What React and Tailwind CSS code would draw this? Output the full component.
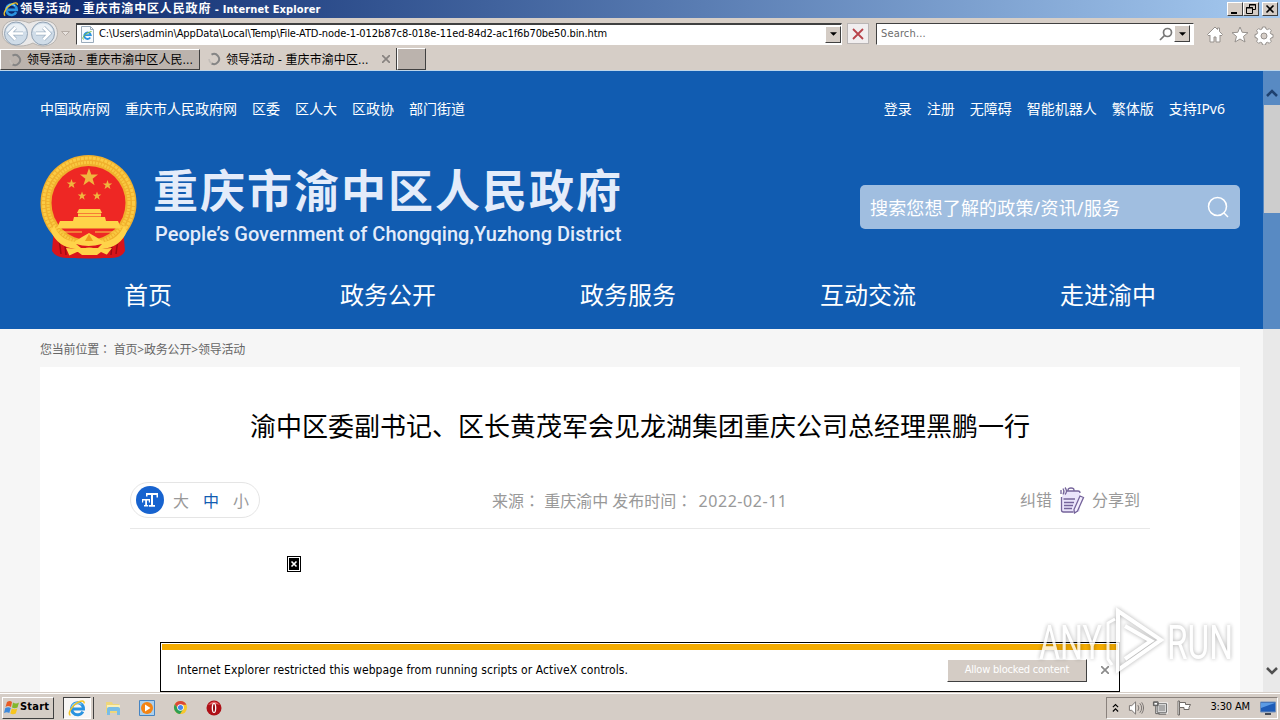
import clsx from 'clsx';

const leftLinks = ['中国政府网', '重庆市人民政府网', '区委', '区人大', '区政协', '部门街道'];
const rightLinks = ['登录', '注册', '无障碍', '智能机器人', '繁体版', '支持IPv6'];
const navItems = ['首页', '政务公开', '政务服务', '互动交流', '走进渝中'];

const raised = 'border border-t-white border-l-white border-r-[#404040] border-b-[#404040]';
const sunken = 'border border-t-[#404040] border-l-[#404040] border-r-white border-b-white';

function IeLogo({ className }) {
    return (
        <svg viewBox="0 0 16 16" className={className} fill="none">
            <path d="M13.200 11.200A5.300 5.300 0 1 1 13.800 8.900H4" stroke="#2a93e0" strokeWidth="2.600" />
            <path d="M3.200 7.500A5.400 5.400 0 0 1 12 4.800" stroke="#8fd3fa" strokeWidth="1" />
            <path d="M2.200 14.600C-.6 13 3 6.600 8 3.500c3.500-2.200 6.800-2.400 6.300.5" stroke="#f3c426" strokeWidth="1.300" />
        </svg>
    );
}

function Spinner() {
    return (
        <svg viewBox="0 0 14 14" className="w-[14px] h-[14px] shrink-0" fill="none">
            <path d="M4.500 2.700a5 5 0 1 1 0 8.600" stroke="#858585" strokeWidth="2" />
            <path d="M4.500 11.300A5 5 0 0 1 2 7" stroke="#c2bdb8" strokeWidth="1.600" />
        </svg>
    );
}

function DropButton() {
    return (
        <div className={clsx('w-4 h-[17px] bg-[#d4ccc5] flex items-center justify-center', raised)}>
            <svg viewBox="0 0 8 4" className="w-[7px] h-1"><path d="M0 0h8L4 4z" fill="#000" /></svg>
        </div>
    );
}

function TitleBar() {
    return (
        <div className="h-[18px] flex items-center pl-[3px] pr-[2px] bg-linear-to-r from-[#0a246a] to-[#a6caf0]">
            <IeLogo className="w-4 h-4" />
            <span className="ml-px text-[11px] leading-[18px] font-bold text-white whitespace-nowrap tracking-[0.12px]">
                <span className="text-[12px] tracking-[0.85px]">领导活动</span> - <span className="text-[12px] tracking-[0.85px]">重庆市渝中区人民政府</span> - Internet Explorer
            </span>
            <div className="ml-auto flex h-[14px] text-black">
                <div className={clsx('w-4 bg-[#d4ccc5]', raised)}>
                    <svg viewBox="0 0 14 12" className="w-[14px] h-3"><path d="M3 9h6v2H3z" /></svg>
                </div>
                <div className={clsx('w-4 bg-[#d4ccc5]', raised)}>
                    <svg viewBox="0 0 14 12" className="w-[14px] h-3" fill="none" stroke="#000">
                        <path d="M5.500 4V1.500h6v5H9M5 2h7M2.500 4.500h6v6h-6zM2 5h7" />
                    </svg>
                </div>
                <div className={clsx('ml-[3px] w-4 bg-[#d4ccc5]', raised)}>
                    <svg viewBox="0 0 14 12" className="w-[14px] h-3" stroke="#000" strokeWidth="1.600"><path d="M3.500 2.500l7 7M10.500 2.500l-7 7" /></svg>
                </div>
            </div>
        </div>
    );
}

function NavButtons() {
    return (
        <svg viewBox="0 0 76 30" className="w-[76px] h-[30px] shrink-0" fill="none">
            <path d="M4 8C8 1 20 1 29 5c9-4 21-4 26 2 4 6 3 14-2 18-7 5-15 3-20 0-8 4-18 4-25 0C2 21 1 14 4 8z" fill="#e9e8e8" stroke="#b7b3af" />
            <circle cx="16" cy="15.500" r="11.500" fill="#cfdce8" stroke="#93a3b4" />
            <circle cx="43" cy="15.500" r="11.500" fill="#cfdce8" stroke="#93a3b4" />
            <path d="M6 13a10.500 10.500 0 0 1 20 0q-10 3-20 0zM33 13a10.500 10.500 0 0 1 20 0q-10 3-20 0z" fill="#eaf0f5" />
            <path d="M23 15.500H10m5.500-6l-6 6 6 6" stroke="#9fb1c3" strokeWidth="4" />
            <path d="M36 15.500h13m-5.500-6l6 6-6 6" stroke="#9fb1c3" strokeWidth="4" />
            <path d="M23 15.500H10m5.500-6l-6 6 6 6" stroke="#fff" strokeWidth="2.600" />
            <path d="M36 15.500h13m-5.500-6l6 6-6 6" stroke="#fff" strokeWidth="2.600" />
            <path d="M61.500 13.500h8l-4 4z" fill="#e8e3df" stroke="#b5aca5" />
        </svg>
    );
}

function Toolbar() {
    return (
        <div className="h-[30px] flex items-center text-[11px]">
            <NavButtons />
            <div className={clsx('w-[766px] h-[22px] flex items-center bg-white border-t-2 pl-[3px] mt-px', sunken)}>
                <svg viewBox="0 0 15 17" className="w-[15px] h-[17px]">
                    <path d="M1.500.5h9l3 3v13h-12z" fill="#f7fafd" stroke="#9aabbb" />
                    <path d="M10.500.5v3h3" fill="none" stroke="#9aabbb" />
                    <IeLogoInner />
                </svg>
                <span className="ml-[4px] whitespace-nowrap tracking-[-0.09px]">
                    C:\Users\admin\AppData\Local\Temp\File-ATD-node-1-012b87c8-018e-11ed-84d2-ac1f6b70be50.bin.htm
                </span>
                <div className="ml-auto"><DropButton /></div>
            </div>
            <div className="ml-[5px] mt-px w-[22px] h-[21px] border border-[#b9b5b5] bg-[#f1eeef] flex items-center justify-center">
                <svg viewBox="0 0 12 12" className="w-3 h-3" stroke="#b8434a" strokeWidth="1.800"><path d="M1 1l10 10M11 1L1 11" /></svg>
            </div>
            <div className={clsx('ml-[7px] mt-px w-[318px] h-[22px] flex items-center bg-white pl-[4px] pr-[3px]', sunken)}>
                <span className="text-[#6d6d6d] tracking-[0.15px] pt-[2px]">Search...</span>
                <svg viewBox="0 0 14 14" className="ml-auto mr-px w-[14px] h-[14px]" fill="none" stroke="#777" strokeWidth="1.700">
                    <circle cx="8.500" cy="5.500" r="4" /><path d="M5.500 8.500L1 13" />
                </svg>
                <DropButton />
            </div>
            <svg viewBox="0 0 70 20" className="ml-[12px] mt-[3px] w-[70px] h-5" fill="#fff" stroke="#96918d">
                <path d="M1.500 9.500L9 2l2.500 2.500V3h2v3.500l3 3-1.500 1.500-1-1v7h-4v-5H8v5H4v-7l-1 1z" />
                <path d="M34 2l2.200 5.300 5.800.4-4.500 3.700 1.500 5.600-5-3-5 3 1.500-5.600L26 7.700l5.800-.4z" />
                <path d="M56.500 2h3l.5 2 1.500.6 1.800-1 2 2-1 1.900.6 1.500 2.100.5v3l-2.100.5-.6 1.500 1 1.800-2 2-1.800-1-1.500.6-.5 2.100h-3l-.5-2.100-1.500-.6-1.900 1-2-2 1-1.800-.6-1.500-2-.5v-3l2-.5.6-1.500-1-1.900 2-2 1.900 1 1.500-.6z" />
                <circle cx="58" cy="11" r="3" fill="#d6cec7" />
            </svg>
        </div>
    );
}

function IeLogoInner() {
    return (
        <g fill="none">
            <path d="M10.300 11.500A3.300 3.300 0 1 1 10.800 9.200H4.500" stroke="#2a93e0" strokeWidth="1.800" />
            <path d="M3.500 13.500C1.500 12 5 7 11.500 5.500" stroke="#7cbf3c" />
        </g>
    );
}

function TabBar() {
    return (
        <div className="h-[22px] flex items-end text-[12px] leading-[20px] whitespace-nowrap">
            <div className={clsx('w-[200px] h-[21px] flex items-center bg-[#bbb3ad] pl-[7px]', raised)}>
                <Spinner />
                <span className="ml-[5px] tracking-[0.05px]">领导活动 - 重庆市渝中区人民...</span>
            </div>
            <div className="w-[197px] h-[22px] flex items-center bg-[#d6cec7] border-r border-r-[#404040] pl-[7px]">
                <Spinner />
                <span className="ml-[5px] pt-px tracking-[0.1px]">领导活动 - 重庆市渝中区...</span>
                <svg viewBox="0 0 8 8" className="ml-auto mr-[6px] w-2 h-2" stroke="#888380" strokeWidth="1.700"><path d="M0 0l8 8M8 0L0 8" /></svg>
            </div>
            <div className={clsx('w-[29px] h-[22px] bg-[#bbb3ad]', raised)} />
        </div>
    );
}

function Emblem() {
    const star = 'M0-10L2.400-3.200 9.500-3.100 3.800 1.200 5.900 8.100 0 4 -5.900 8.100 -3.800 1.200 -9.500-3.100 -2.400-3.200Z';
    return (
        <svg viewBox="0 0 98 104" className="w-[98px] h-[104px] shrink-0">
            <path d="M14 72L12 96q4 7 16 7h42q12 0 15-7l-2-24z" fill="#d9141a" />
            <path d="M18 76l3 23M24 80l2 20M79 76l-3 23M73 80l-2 20" stroke="#9f0b12" strokeWidth="1.500" />
            <circle cx="48.500" cy="48" r="48" fill="#f0b02d" />
            <circle cx="48.500" cy="48" r="45" fill="none" stroke="#fbcb45" strokeWidth="3" strokeDasharray="3 1" />
            <circle cx="48.500" cy="48" r="40.500" fill="none" stroke="#f9c941" strokeWidth="3" strokeDasharray="2 1" />
            <circle cx="48.500" cy="48" r="37" fill="#ee2724" />
            <g fill="#f0b63e">
                <path transform="translate(49 22.500) scale(.95)" d={star} />
                <path transform="translate(31.500 29) scale(.5)" d={star} />
                <path transform="translate(67.500 30) scale(.5)" d={star} />
                <path transform="translate(42 41) scale(.45)" d={star} />
                <path transform="translate(57 41) scale(.45)" d={star} />
            </g>
            <g fill="#ffd349">
                <path d="M39 54h21l2 4H37zM38 58.500h23v3H38zM34 62h31l1 4H33zM20 66h58l3 7H17z" />
                <path d="M14 70q5 14 20 17l8-5 7-4 7 4 8 5q15-3 20-17l3 6q-6 16-25 18H36Q17 92 11 76z" />
                <path d="M26 93l12 1 5-5h12l5 5 12-1-7 9-6-3-8 2h-6l-8-2-7 3z" />
            </g>
            <path d="M20 73h58M22 77h20M55 77h20" stroke="#f8d04a" strokeWidth="1" />
            <path d="M49 79l-4 7h8z" fill="#ee9d1c" />
            <path d="M36 89q12 4 26 0l-4 4H41zM26 102l11-5h24l11 5q-23 3-46 0z" fill="#d9141a" />
            <path d="M38 97q11-9 23 0l-4 3H42z" fill="#ffd349" />
        </svg>
    );
}

function SiteHeader() {
    return (
        <header className="h-[258px] bg-[#115cb1] text-white pt-[28px]">
            <div className="flex justify-between px-10 text-[14px] leading-5 whitespace-nowrap">
                <div className="flex gap-[15px]">
                    {leftLinks.map((l) => <a key={l}>{l}</a>)}
                </div>
                <div className="flex gap-[15px] pr-[15px]">
                    {rightLinks.map((l) => <a key={l}>{l}</a>)}
                </div>
            </div>
            <div className="flex px-10 pt-[36px]">
                <Emblem />
                <div className="ml-[15px] pt-[8px] text-[#e4ecfa]">
                    <div className="text-[45px] leading-[56px] font-bold tracking-[2px] whitespace-nowrap">重庆市渝中区人民政府</div>
                    <div className="font-['Roboto'] text-[20px] leading-[28px] mt-px pl-[2px] font-medium whitespace-nowrap tracking-[0.02px]">
                        People’s Government of Chongqing,Yuzhong District
                    </div>
                </div>
                <div className="ml-auto mt-[30px] w-[380px] h-[44px] rounded-[5px] bg-[#a0bee0] flex items-center pl-[10px] pr-[11px]">
                    <span className="text-[18px] leading-6 pt-[2px] tracking-[0.18px]">搜索您想了解的政策/资讯/服务</span>
                    <svg viewBox="0 0 22 22" className="ml-auto w-[22px] h-[22px]" fill="none" stroke="#fff" strokeWidth="1.500">
                        <circle cx="10.500" cy="10.500" r="9" /><path d="M17 17l4 4" />
                    </svg>
                </div>
            </div>
            <nav className="flex pl-[28px] pt-[19px]">
                {navItems.map((n) => (
                    <a key={n} className="w-[240px] text-center text-[24px] leading-[34px]">{n}</a>
                ))}
            </nav>
        </header>
    );
}

// full-width colon centred in its box
function Colon() {
    return <span className="font-['Noto_Sans_CJK_TC']" lang="zh-TW">：</span>;
}

function Article() {
    return (
        <main className="mx-10 h-[326px] bg-white">
            <h1 className="pt-[40px] text-center text-[26px] leading-[38px] text-black whitespace-nowrap">
                渝中区委副书记、区长黄茂军会见龙湖集团重庆公司总经理黑鹏一行
            </h1>
            <div className="mx-[90px] mt-[37px] h-[47px] border-b border-[#e8e8e8] flex items-start text-[16px] leading-[36px] text-[#999]">
                <div className="w-[130px] h-[36px] rounded-full border border-[#e5e5e5] flex items-center pl-[5px]">
                    <svg viewBox="0 0 28 28" className="w-7 h-7 mr-[9px]">
                        <circle cx="14" cy="14" r="14" fill="#1763cf" />
                        <path d="M10 7h12v4.500h-1.500V9H17v10h2v1.800h-6V19h2V9h-3.500v1.500H10zM6 13h8v3.500h-1.200V14.500H11V19h1.200v1.500H8V19h1.200v-4.500H7.200v2H6z" fill="#fff" />
                    </svg>
                    <span className="mr-[14px] pt-[2px]">大</span>
                    <span className="mr-[14px] pt-[2px] text-[#115cb1]">中</span>
                    <span className="pt-[2px]">小</span>
                </div>
                <div className="whitespace-pre ml-[232px]">
                    来源<Colon /> 重庆渝中 发布时间<Colon /> <span className="ml-[2px] tracking-[0.55px]">2022-02-11</span>
                </div>
                <div className="flex items-center ml-auto mr-[10px]">
                    <span>纠错</span>
                    <svg viewBox="0 0 26 28" className="w-[26px] h-7 mx-[7px]" fill="none" stroke="#75649b" strokeWidth="1.300">
                        <path d="M3 10q3-2 4-5h12q2 0 2 3v16q0 2-2 2H5q-2 0-2-2z" fill="#eae4fb" stroke="none" />
                        <path d="M2.500 11v13q0 2 2 2h10M9 5V4q0-2 3-2t3 2v1h4q2 0 2 2M8 5h8M4.500 13H16M5 16.500h10M5 19.500h9M5 22.500h8" />
                        <path d="M21 10l3.500 1.500-6 13.500-3 2-.5-3.500z" fill="#f5efff" />
                        <path d="M2 4v4M4 2.500q2 3 0 6M6 1.500q3 4 0 7" />
                    </svg>
                    <span>分享到</span>
                </div>
            </div>
            <div className="ml-[247px] mt-[27px] w-[14px] h-4 border border-black p-px">
                <svg viewBox="0 0 10 12" className="w-[10px] h-3"><path d="M0 0h10v12H0z" /><path d="M2.500 3.500l5 5M7.500 3.500l-5 5" stroke="#fff" strokeWidth="1.600" /></svg>
            </div>
        </main>
    );
}

function Scrollbar() {
    return (
        <div className="absolute right-0 inset-y-0 w-[17px] flex flex-col">
            <div className="h-[258px] bg-[#588ac3]">
                <div className="h-[34px] flex items-center justify-center pt-[9px]">
                    <svg viewBox="0 0 12 8" className="w-3 h-2" fill="none" stroke="#1e4170" strokeWidth="2.500"><path d="M1 7l5-5 5 5" /></svg>
                </div>
                <div className="ml-px h-[108px] bg-[#cdcdcd]" />
            </div>
            <div className="flex-1 bg-[#e9e9e9] flex items-end justify-center pb-[17px]">
                <svg viewBox="0 0 12 8" className="w-3 h-2" fill="none" stroke="#505050" strokeWidth="2.500"><path d="M1 1l5 5 5-5" /></svg>
            </div>
        </div>
    );
}

function NotificationBar() {
    return (
        <div className="absolute left-[160px] bottom-0 w-[960px] h-[50px] border border-black bg-white p-px font-['DejaVu_Sans_Condensed','Noto_Sans_CJK_SC',sans-serif]">
            <div className="h-[6px] bg-[#f3ab00]" />
            <div className="flex items-center h-[40px] pl-[15px] pr-[9px]">
                <span className="text-[12px] text-black whitespace-nowrap tracking-[0.09px]">
                    Internet Explorer restricted this webpage from running scripts or ActiveX controls.
                </span>
                <button className={clsx('ml-auto w-[140px] h-[23px] bg-[#d4ccc5] text-white text-[11px] tracking-[-0.2px]', raised)}>
                    Allow blocked content
                </button>
                <svg viewBox="0 0 8 8" className="ml-[14px] w-2 h-2" stroke="#8b8b8b" strokeWidth="1.700"><path d="M0 0l8 8M8 0L0 8" /></svg>
            </div>
        </div>
    );
}

function Watermark() {
    return (
        <svg viewBox="0 0 200 70" className="absolute left-[1036px] top-[535px] w-[200px] h-[70px] overflow-visible opacity-80 drop-shadow-[0_0_2px_rgba(0,0,0,0.4)]">
            <g fill="#fff" fontFamily="Roboto, sans-serif" fontSize="48" fontWeight="400">
                <text x="3" y="53" textLength="63" lengthAdjust="spacingAndGlyphs">ANY</text>
                <text x="131" y="53" textLength="66" lengthAdjust="spacingAndGlyphs">RUN</text>
            </g>
            <g fill="none" stroke="#fff" strokeWidth="4">
                <path d="M82 5l43 29-43 30zM89 20l26 15-26 18" />
                <path d="M79 13l-7 4v36l4 6" strokeWidth="3" />
            </g>
        </svg>
    );
}

function Taskbar() {
    return (
        <div className="h-[28px] bg-[#d5cdc6] border-t border-[#d5cdc6] flex items-center shadow-[inset_0_1px_0_#fff] pt-[2px] pl-[2px] pr-[2px] text-[11px] text-black">
            <div className={clsx('w-[52px] h-[22px] flex items-center pl-px', raised)}>
                <svg viewBox="0 0 16 16" className="w-4 h-4">
                    <path d="M3 2q3-2 5 0L7 7Q4 5 1.500 7z" fill="#e85b24" />
                    <path d="M9 2.500q3 2 6 0l-1.500 5q-3 1.500-5.500 0z" fill="#83b72b" />
                    <path d="M1.300 8q3-1.500 5.500 0l-1.500 5Q3 11.500 0 13z" fill="#3d89dc" />
                    <path d="M7.800 8.500q3 1.500 5.500 0l-1.500 5q-3 1.500-5.500 0z" fill="#f7c51e" />
                </svg>
                <span className="font-bold tracking-[0.2px]">Start</span>
            </div>
            <div className={clsx('ml-[9px] w-[28px] h-[22px] bg-[#f8f6f5] flex items-center justify-center', sunken)}>
                <IeLogo className="w-[18px] h-[18px]" />
            </div>
            <div className="w-[3px] h-[22px] border-r border-[#404040]" />
            <svg viewBox="0 0 16 16" className="ml-[11px] w-4 h-4">
                <path d="M1 2h6l1 2h6v9H1z" fill="#eed67b" /><path d="M2 5h13v3H2z" fill="#faf0b6" />
                <path d="M2 15V9q0-2 2-2h9q2 0 2 2v6h-3v-4H5v4z" fill="#79bde6" />
            </svg>
            <svg viewBox="0 0 16 16" className="ml-[18px] w-4 h-4">
                <path d="M.5.5h15v15H.5z" fill="#acd0ed" stroke="#4684c2" /><circle cx="8" cy="8" r="6" fill="#f48414" /><path d="M6 4.500L11.500 8 6 11.500z" fill="#fff" />
            </svg>
            <svg viewBox="0 0 16 16" className="ml-[18px] w-[15px] h-[15px]">
                <circle cx="8" cy="8" r="7" fill="#f7c72d" />
                <path d="M2 4.500a7 7 0 0 1 12.200.5H8L5 9z" fill="#da4638" />
                <path d="M2 4.500A7 7 0 0 0 7.500 15L11 9.500 5 9z" fill="#2d9f55" />
                <circle cx="8" cy="8" r="3.500" fill="#fff" /><circle cx="8" cy="8" r="2.700" fill="#4286ee" />
            </svg>
            <svg viewBox="0 0 16 16" className="ml-[18px] w-4 h-4">
                <circle cx="8" cy="8" r="7.500" fill="#ae1017" /><path d="M2 5q6-7 12 0-4-2-12 0z" fill="#e66464" /><ellipse cx="8" cy="8" rx="2.300" ry="5" fill="#fff" /><ellipse cx="8" cy="8" rx="1" ry="4" fill="#91080d" />
            </svg>
            <div className="ml-auto w-[172px] h-[22px] flex items-center border border-t-[#8a827d] border-l-[#8a827d] border-r-white border-b-white pl-[5px] pr-px">
                <svg viewBox="0 0 8 10" className="w-[7px] h-[10px]" fill="none" stroke="#000" strokeWidth="1.300"><path d="M1 4l3-3 3 3M1 9l3-3 3 3" /></svg>
                <svg viewBox="0 0 18 16" className="ml-[9px] w-[17px] h-4" fill="none" stroke="#76716e">
                    <path d="M1.500 5.500H4l4-4v13l-4-4H1.500z" fill="#fff" /><path d="M10.500 5q2 3 0 6M12.500 3q4 5 0 10M14.500 2q4 6 0 12" />
                </svg>
                <svg viewBox="0 0 18 16" className="ml-[7px] w-[17px] h-4" fill="none" stroke="#555">
                    <path d="M5.500 3.500h10v9h-10z" fill="#aaa" stroke="#fff" strokeWidth="2.500" /><path d="M5.500 3.500h10v9h-10zM7 14.500h8M1.500 1.500h5v4h-5zM4 6v8h4" /><path d="M2 2h4v3H2z" fill="#fff" />
                </svg>
                <svg viewBox="0 0 16 16" className="ml-[7px] w-4 h-4" stroke="#6f6a66"><path d="M2 1h1.500v14H2z" fill="#fff" /><path d="M3.500 2.500h6v2h5l-1.500 3 0 2h-5v-2H3.500z" fill="#fff" /></svg>
                <span className="ml-auto mr-[10px] tracking-[-0.15px] whitespace-nowrap">3:30 AM</span>
                <svg viewBox="0 0 16 14" className="w-4 h-[14px]"><path d="M.5 1h15v10H.5z" fill="#1e5cb7" stroke="#7090ba" /><path d="M1 2h14L1 7z" fill="#5b9be4" /><path d="M5 12h6v2H5z" fill="#454b55" /></svg>
            </div>
        </div>
    );
}

export default function App() {
    return (
        <div className="w-[1280px] h-[720px] overflow-hidden flex flex-col bg-[#d6cec7] text-black font-['DejaVu_Sans_Condensed','Noto_Sans_CJK_SC',sans-serif]">
            <TitleBar />
            <Toolbar />
            <TabBar />
            <div className="h-px bg-[#bcd5ea]" />
            <div className="relative h-[621px] overflow-hidden bg-[#f6f6f6] font-['Noto_Sans','Noto_Sans_CJK_SC',sans-serif]">
                <SiteHeader />
                <div className="h-[38px] px-10 pt-px text-[12px] leading-[38px] text-[#666] whitespace-pre tracking-[-0.2px]">
                    您当前位置<Colon /> 首页&gt;政务公开&gt;领导活动
                </div>
                <Article />
                <Scrollbar />
                <NotificationBar />
                <Watermark />
            </div>
            <Taskbar />
        </div>
    );
}
